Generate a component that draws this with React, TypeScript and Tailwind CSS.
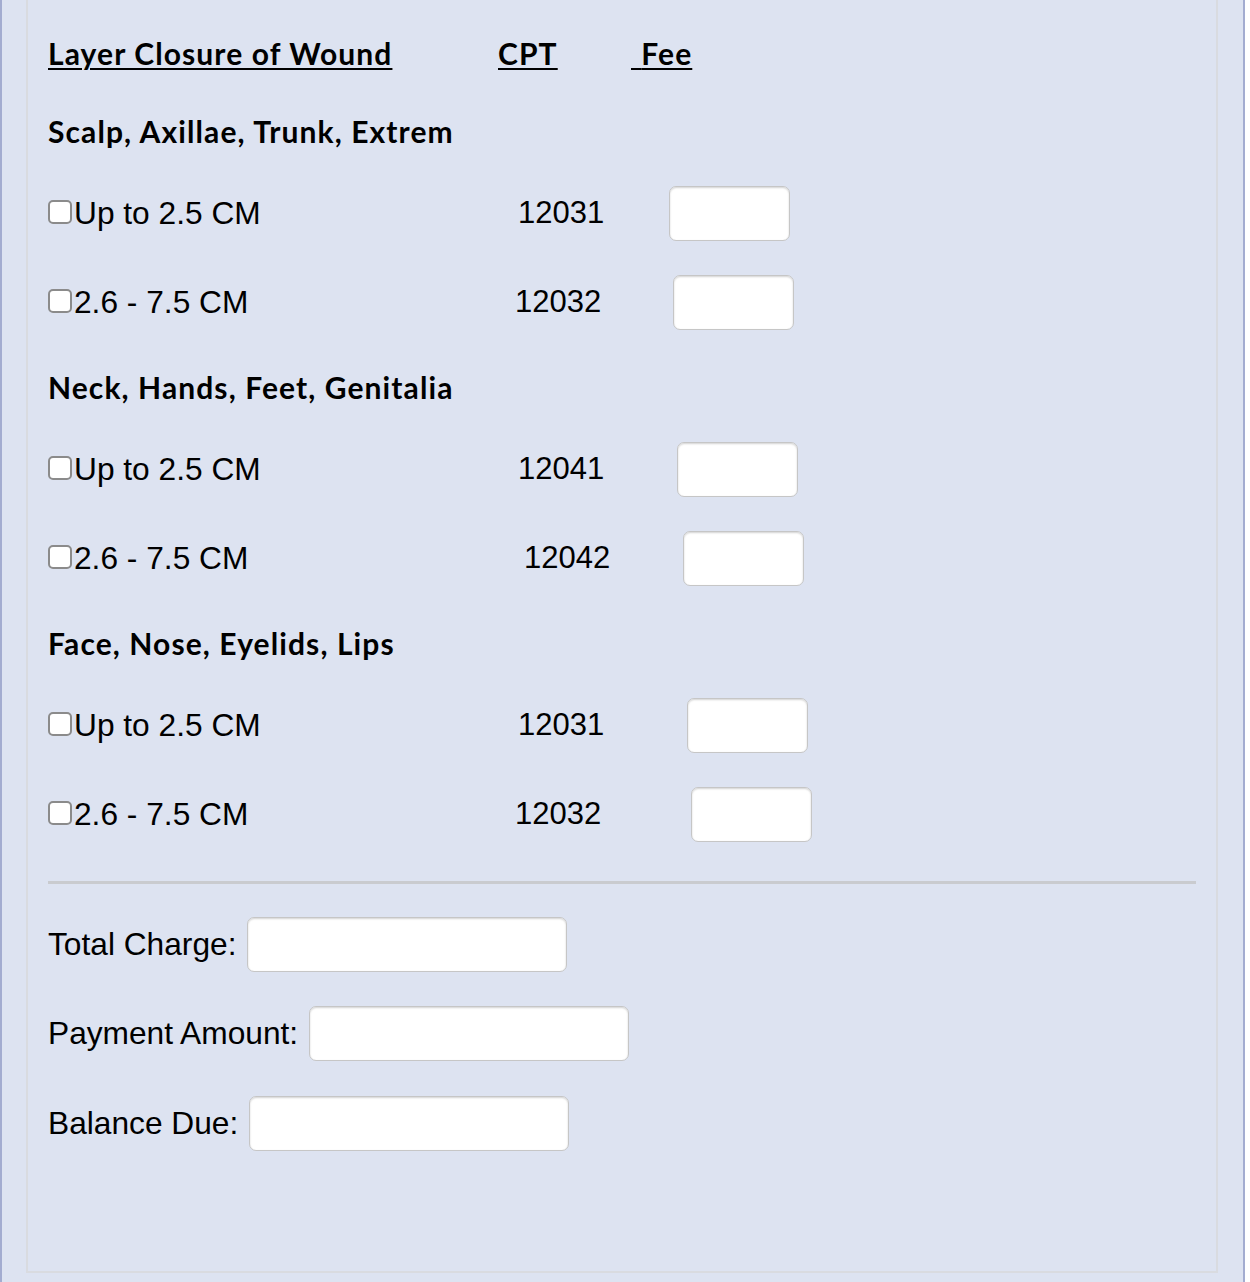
import React from 'react';

interface FeeRow {
  label: string;
  code: string;
  rowCls: string;
  codeCls: string;
  inputCls: string;
}

interface Section {
  title: string;
  titleCls: string;
  rows: FeeRow[];
}

const SECTIONS: Section[] = [
  {
    title: 'Scalp, Axillae, Trunk, Extrem',
    titleCls: 'mt-[30px]',
    rows: [
      { label: 'Up to 2.5 CM', code: '12031', rowCls: 'mt-[35px]', codeCls: 'pl-[4px]', inputCls: 'ml-0' },
      { label: '2.6 - 7.5 CM', code: '12032', rowCls: 'mt-[34px]', codeCls: 'pl-[1px]', inputCls: 'ml-[4px]' },
    ],
  },
  {
    title: 'Neck, Hands, Feet, Genitalia',
    titleCls: 'mt-[37px]',
    rows: [
      { label: 'Up to 2.5 CM', code: '12041', rowCls: 'mt-[35px]', codeCls: 'pl-[4px]', inputCls: 'ml-[8px]' },
      { label: '2.6 - 7.5 CM', code: '12042', rowCls: 'mt-[34px]', codeCls: 'pl-[10px]', inputCls: 'ml-[14px]' },
    ],
  },
  {
    title: 'Face, Nose, Eyelids, Lips',
    titleCls: 'mt-[37px]',
    rows: [
      { label: 'Up to 2.5 CM', code: '12031', rowCls: 'mt-[35px]', codeCls: 'pl-[4px]', inputCls: 'ml-[18px]' },
      { label: '2.6 - 7.5 CM', code: '12032', rowCls: 'mt-[34px]', codeCls: 'pl-[1px]', inputCls: 'ml-[22px]' },
    ],
  },
];

const TOTALS = [
  { label: 'Total Charge:', rowCls: 'mt-[33px]' },
  { label: 'Payment Amount:', rowCls: 'mt-[34px]' },
  { label: 'Balance Due:', rowCls: 'mt-[35px]' },
];

const heading = "font-['Lato',sans-serif] font-bold text-[30px] tracking-[1.1px] text-black";
const body = "font-['Liberation_Sans',Arial,sans-serif] text-[31.7px] text-black";
const box =
  'h-[55px] bg-white border border-[#c6c6c6] rounded-[7px] shadow-[inset_0_1px_2px_rgba(0,0,0,0.18)] outline-none';

export default function App() {
  return (
    <div className="min-h-screen bg-white">
      <div className="w-[1245px] h-[1282px] bg-[#dde3f1] border-l-2 border-r-2 border-[#a3acd0] pl-[24px] pr-[25px] pb-[9px]">
        <div className="h-full border-l-2 border-r-2 border-b-2 border-[#d9dbe0] px-[20px] pt-[26px]">
          {/* column headers */}
          <div className={`flex items-center h-[55px] ${heading}`}>
            <div className="w-[450px]">
              <span className="underline decoration-2 underline-offset-[3px]">Layer Closure of Wound</span>
            </div>
            <div className="w-[133px]">
              <span className="underline decoration-2 underline-offset-[3px]">CPT</span>
            </div>
            <span className="underline decoration-2 underline-offset-[3px]">
              <span className="tracking-[3px]">{'\u00a0'}</span>Fee
            </span>
          </div>

          {SECTIONS.map((s) => (
            <div key={s.title}>
              <div className={`flex items-center h-[40px] ${heading} ${s.titleCls}`}>{s.title}</div>
              {s.rows.map((r, i) => (
                <div key={i} className={`flex items-center h-[55px] ${body} ${r.rowCls}`}>
                  <label className="w-[466px] flex items-center">
                    <input
                      type="checkbox"
                      className="appearance-none w-[24px] h-[24px] bg-white border-2 border-[#8b8b8b] rounded-[5px] mr-[2px] -mt-[3px]"
                    />
                    <span>{r.label}</span>
                  </label>
                  <div className={`w-[155px] text-[31px] ${r.codeCls}`}>{r.code}</div>
                  <input type="text" className={`w-[121px] ${box} ${r.inputCls}`} />
                </div>
              ))}
            </div>
          ))}

          <div className="mt-[39px] h-[3px] bg-[#c9cbcf]" />

          {TOTALS.map((t) => (
            <div key={t.label} className={`flex items-center h-[55px] ${body} ${t.rowCls}`}>
              <span>{t.label}</span>
              <input type="text" className={`w-[320px] ml-[11px] ${box}`} />
            </div>
          ))}
        </div>
      </div>
    </div>
  );
}
